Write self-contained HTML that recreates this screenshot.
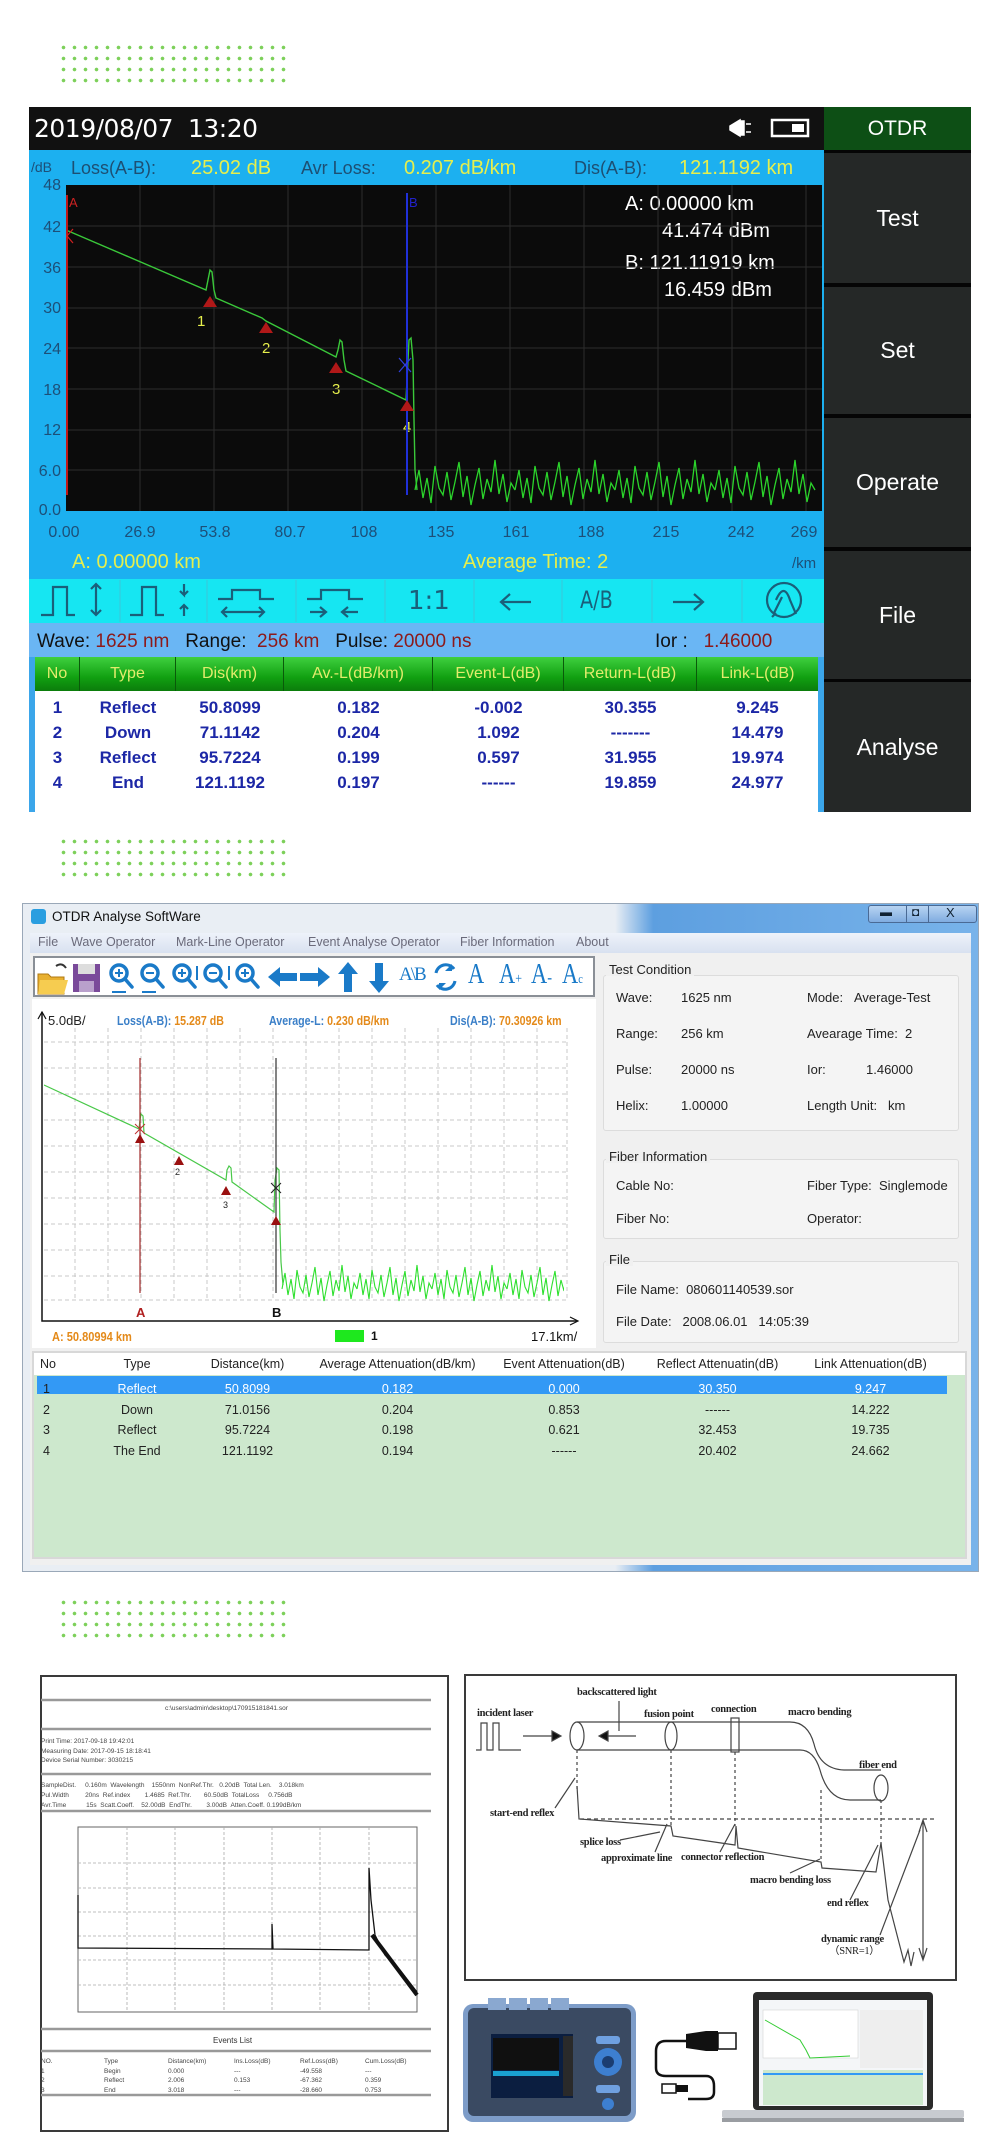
<!DOCTYPE html>
<html><head><meta charset="utf-8">
<style>
*{margin:0;padding:0;box-sizing:border-box}
body{width:1000px;height:2150px;background:#fff;position:relative;overflow:hidden;font-family:"Liberation Sans",sans-serif}
.a{position:absolute;white-space:nowrap;line-height:1}
.dots{position:absolute;left:58px;width:228px;height:44px;background-image:radial-gradient(circle,#7dd05a 1.6px,transparent 2px);background-size:11px 11px}
.y1{color:#1d4f78;font-size:16px;width:30px;text-align:right;left:31px}
.x1{color:#1d4f78;font-size:16px;top:525px;width:50px;text-align:center}
.lb{color:#1d4f73;font-size:18px;font-family:"Liberation Sans",sans-serif}
.yl{color:#e6ef4c;font-size:20px}
.btn{position:absolute;left:824px;width:147px;background:#252827;color:#fff;font-size:23px;display:flex;align-items:center;justify-content:center}
.th{position:absolute;top:657px;height:34px;color:#e3ec6c;font-size:16px;display:flex;align-items:center;justify-content:center;border-right:1px solid #0a5a0a}
.tr{position:absolute;color:#1c27a6;font-size:17px;font-weight:bold;text-align:center}
.g2{color:#222;font-size:13px}
.mn{color:#6a6a7a;font-size:12.5px;top:936px}
.sh{position:absolute;top:1352px;height:23px;font-size:12.5px;color:#222;display:flex;align-items:center;justify-content:center}
.sr{position:absolute;font-size:12.5px;color:#222;text-align:center}
.dg{font-family:"Liberation Serif",serif;font-weight:bold;font-size:10.5px;color:#222;letter-spacing:-0.3px}
.rp{font-size:6.5px;color:#444}
</style></head><body>

<div class="dots" style="top:42px"></div>
<div class="dots" style="top:836px"></div>
<div class="dots" style="top:1597px"></div>

<div class="a" style="left:29px;top:107px;width:795px;height:43px;background:#111"></div>
<div class="a" style="left:34px;top:116px;color:#fff;font-size:25px;font-family:'DejaVu Sans',sans-serif;letter-spacing:-0.5px">2019/08/07&nbsp;&nbsp;13:20</div>
<div class="a" style="left:29px;top:150px;width:795px;height:429px;background:#1cb0f0"></div>
<div class="a" style="left:29px;top:579px;width:795px;height:44px;background:#16e6f2"></div>
<div class="a" style="left:29px;top:623px;width:795px;height:34px;background:#6ab6f4"></div>
<div class="a" style="left:29px;top:657px;width:795px;height:155px;background:#3ba6ea"></div>
<div class="a" style="left:35px;top:657px;width:783px;height:155px;background:#fff"></div>
<div class="a" style="left:66px;top:185px;width:756px;height:326px;background:#0b0b0b"></div>

<div class="a" style="left:31px;top:160px;color:#1d4f78;font-size:14px">/dB</div>
<div class="a lb" style="left:71px;top:159px">Loss(A-B):</div>
<div class="a yl" style="left:191px;top:158px">25.02 dB</div>
<div class="a lb" style="left:301px;top:159px">Avr Loss:</div>
<div class="a yl" style="left:404px;top:158px">0.207 dB/km</div>
<div class="a lb" style="left:574px;top:159px">Dis(A-B):</div>
<div class="a yl" style="left:679px;top:158px">121.1192 km</div>

<div class="a y1" style="top:178px">48</div>
<div class="a y1" style="top:220px">42</div>
<div class="a y1" style="top:261px">36</div>
<div class="a y1" style="top:301px">30</div>
<div class="a y1" style="top:342px">24</div>
<div class="a y1" style="top:383px">18</div>
<div class="a y1" style="top:423px">12</div>
<div class="a y1" style="top:464px">6.0</div>
<div class="a y1" style="top:503px">0.0</div>

<div class="a x1" style="left:39px">0.00</div>
<div class="a x1" style="left:115px">26.9</div>
<div class="a x1" style="left:190px">53.8</div>
<div class="a x1" style="left:265px">80.7</div>
<div class="a x1" style="left:339px">108</div>
<div class="a x1" style="left:416px">135</div>
<div class="a x1" style="left:491px">161</div>
<div class="a x1" style="left:566px">188</div>
<div class="a x1" style="left:641px">215</div>
<div class="a x1" style="left:716px">242</div>
<div class="a x1" style="left:779px">269</div>
<div class="a" style="left:72px;top:552px;color:#e6ef4c;font-size:20px">A: 0.00000 km</div>
<div class="a" style="left:463px;top:552px;color:#e6ef4c;font-size:20px">Average Time: 2</div>
<div class="a" style="left:792px;top:556px;color:#1d4f78;font-size:15px">/km</div>

<div class="a" style="left:625px;top:194px;color:#fff;font-size:20px">A: 0.00000 km</div>
<div class="a" style="left:662px;top:221px;color:#fff;font-size:20px">41.474 dBm</div>
<div class="a" style="left:625px;top:253px;color:#fff;font-size:20px">B: 121.11919 km</div>
<div class="a" style="left:664px;top:280px;color:#fff;font-size:20px">16.459 dBm</div>

<div class="a" style="left:197px;top:314px;color:#e6ef4c;font-size:15px">1</div>
<div class="a" style="left:262px;top:341px;color:#e6ef4c;font-size:15px">2</div>
<div class="a" style="left:332px;top:382px;color:#e6ef4c;font-size:15px">3</div>
<div class="a" style="left:403px;top:420px;color:#e6ef4c;font-size:15px">4</div>
<div class="a" style="left:69px;top:196px;color:#c22;font-size:13px">A</div>
<div class="a" style="left:409px;top:196px;color:#22c;font-size:13px">B</div>

<div class="a" style="left:408px;top:588px;color:#1a5f7a;font-size:26px;font-family:'DejaVu Sans',sans-serif">1:1</div>
<div class="a" style="left:580px;top:588px;color:#1a5f7a;font-size:24px;font-family:'DejaVu Sans',sans-serif;transform:scaleX(.8);transform-origin:left">A/B</div>

<div class="a" style="left:37px;top:632px;font-size:19px;color:#111">Wave: <span style="color:#8c1a1a">1625 nm</span>&nbsp;&nbsp;&nbsp;Range:&nbsp;&nbsp;<span style="color:#8c1a1a">256 km</span>&nbsp;&nbsp;&nbsp;Pulse: <span style="color:#8c1a1a">20000 ns</span></div>
<div class="a" style="left:655px;top:632px;font-size:19px;color:#111">Ior :&nbsp;&nbsp;&nbsp;<span style="color:#8c1a1a">1.46000</span></div>

<div class="a" style="left:35px;top:657px;width:783px;height:34px;background:linear-gradient(#3fd03f,#11a011 60%,#0b7c0b)"></div>
<div class="th" style="left:35px;width:45px">No</div>
<div class="th" style="left:80px;width:96px">Type</div>
<div class="th" style="left:176px;width:108px">Dis(km)</div>
<div class="th" style="left:284px;width:149px">Av.-L(dB/km)</div>
<div class="th" style="left:433px;width:131px">Event-L(dB)</div>
<div class="th" style="left:564px;width:133px">Return-L(dB)</div>
<div class="th" style="left:697px;width:121px;border:none">Link-L(dB)</div>

<div class="tr" style="left:35px;top:695px;width:45px;line-height:25px">1<br>2<br>3<br>4</div>
<div class="tr" style="left:80px;top:695px;width:96px;line-height:25px">Reflect<br>Down<br>Reflect<br>End</div>
<div class="tr" style="left:176px;top:695px;width:108px;line-height:25px">50.8099<br>71.1142<br>95.7224<br>121.1192</div>
<div class="tr" style="left:284px;top:695px;width:149px;line-height:25px">0.182<br>0.204<br>0.199<br>0.197</div>
<div class="tr" style="left:433px;top:695px;width:131px;line-height:25px">-0.002<br>1.092<br>0.597<br>------</div>
<div class="tr" style="left:564px;top:695px;width:133px;line-height:25px">30.355<br>-------<br>31.955<br>19.859</div>
<div class="tr" style="left:697px;top:695px;width:121px;line-height:25px">9.245<br>14.479<br>19.974<br>24.977</div>

<div class="a" style="left:824px;top:107px;width:147px;height:705px;background:#050505"></div>
<div class="btn" style="top:107px;height:43px;background:#0d4f15;font-size:21px">OTDR</div>
<div class="btn" style="top:153px;height:130px">Test</div>
<div class="btn" style="top:287px;height:127px">Set</div>
<div class="btn" style="top:418px;height:129px">Operate</div>
<div class="btn" style="top:551px;height:128px">File</div>
<div class="btn" style="top:682px;height:130px">Analyse</div>

<div class="a" style="left:22px;top:903px;width:957px;height:669px;background:linear-gradient(90deg,#e9eef4 0,#e9eef4 62%,#5d9fe0 66%,#78b3ea 100%);border:1px solid #9aa8b8"></div>
<div class="a" style="left:30px;top:933px;width:941px;height:632px;background:#f0f0f0"></div>
<div class="a" style="left:30px;top:933px;width:941px;height:20px;background:linear-gradient(#eef2fa,#d8e1f0)"></div>
<div class="a" style="left:31px;top:909px;width:15px;height:15px;background:#2a9ee0;border-radius:3px"></div>
<div class="a" style="left:52px;top:910px;font-size:13.5px;color:#111">OTDR Analyse SoftWare</div>
<div class="a" style="left:868px;top:905px;width:109px;height:18px;border:1px solid #4a6a95;border-radius:3px;background:linear-gradient(#b8d4f2,#80ace0)"></div>
<div class="a" style="left:880px;top:906px;font-size:12px;color:#123">▬</div>
<div class="a" style="left:906px;top:906px;width:1px;height:16px;background:#4a6a95"></div>
<div class="a" style="left:912px;top:906px;font-size:12px;color:#123">◘</div>
<div class="a" style="left:928px;top:906px;width:1px;height:16px;background:#4a6a95"></div>
<div class="a" style="left:946px;top:906px;font-size:13px;color:#123">X</div>

<div class="a mn" style="left:38px">File</div>
<div class="a mn" style="left:71px">Wave Operator</div>
<div class="a mn" style="left:176px">Mark-Line Operator</div>
<div class="a mn" style="left:308px">Event Analyse Operator</div>
<div class="a mn" style="left:460px">Fiber Information</div>
<div class="a mn" style="left:576px">About</div>

<div class="a" style="left:33px;top:956px;width:562px;height:41px;background:#fff;border:2px solid #8a8f96"></div>
<div class="a" style="left:32px;top:999px;width:564px;height:349px;background:#fff"></div>

<div class="a" style="left:48px;top:1014px;font-size:13px;color:#222">5.0dB/</div>
<div class="a" style="left:117px;top:1015px;font-size:12.5px;color:#3a7fc8;font-weight:bold;transform:scaleX(.85);transform-origin:left">Loss(A-B): <span style="color:#e48a1a">15.287 dB</span></div>
<div class="a" style="left:269px;top:1015px;font-size:12.5px;color:#3a7fc8;font-weight:bold;transform:scaleX(.85);transform-origin:left">Average-L: <span style="color:#e48a1a">0.230 dB/km</span></div>
<div class="a" style="left:450px;top:1015px;font-size:12.5px;color:#3a7fc8;font-weight:bold;transform:scaleX(.85);transform-origin:left">Dis(A-B): <span style="color:#e48a1a">70.30926 km</span></div>
<div class="a" style="left:136px;top:1306px;font-size:13px;color:#b02020;font-weight:bold">A</div>
<div class="a" style="left:272px;top:1306px;font-size:13px;color:#111;font-weight:bold">B</div>
<div class="a" style="left:175px;top:1168px;font-size:9px;color:#222">2</div>
<div class="a" style="left:223px;top:1201px;font-size:9px;color:#222">3</div>
<div class="a" style="left:52px;top:1330px;font-size:13px;color:#e48a1a;font-weight:bold;transform:scaleX(.85);transform-origin:left">A: 50.80994 km</div>
<div class="a" style="left:335px;top:1330px;width:29px;height:12px;background:#1ee81e"></div>
<div class="a" style="left:371px;top:1330px;font-size:12px;color:#111;font-weight:bold">1</div>
<div class="a" style="left:531px;top:1330px;font-size:13px;color:#111">17.1km/</div>

<div class="a" style="left:603px;top:975px;width:356px;height:156px;border:1px solid #dcdcdc;border-radius:3px;background:#f4f4f4"></div>
<div class="a" style="left:606px;top:963px;font-size:13px;color:#222;background:#f0f0f0;padding:0 3px">Test Condition</div>
<div class="a g2" style="left:616px;top:991px">Wave:</div><div class="a g2" style="left:681px;top:991px">1625 nm</div>
<div class="a g2" style="left:807px;top:991px">Mode:&nbsp;&nbsp;&nbsp;Average-Test</div>
<div class="a g2" style="left:616px;top:1027px">Range:</div><div class="a g2" style="left:681px;top:1027px">256 km</div>
<div class="a g2" style="left:807px;top:1027px">Avearage Time:&nbsp;&nbsp;2</div>
<div class="a g2" style="left:616px;top:1063px">Pulse:</div><div class="a g2" style="left:681px;top:1063px">20000 ns</div>
<div class="a g2" style="left:807px;top:1063px">Ior:</div><div class="a g2" style="left:866px;top:1063px">1.46000</div>
<div class="a g2" style="left:616px;top:1099px">Helix:</div><div class="a g2" style="left:681px;top:1099px">1.00000</div>
<div class="a g2" style="left:807px;top:1099px">Length Unit:&nbsp;&nbsp;&nbsp;km</div>

<div class="a" style="left:603px;top:1159px;width:356px;height:80px;border:1px solid #dcdcdc;border-radius:3px;background:#f4f4f4"></div>
<div class="a" style="left:606px;top:1150px;font-size:13px;color:#222;background:#f0f0f0;padding:0 3px">Fiber Information</div>
<div class="a g2" style="left:616px;top:1179px">Cable No:</div>
<div class="a g2" style="left:807px;top:1179px">Fiber Type:&nbsp;&nbsp;Singlemode</div>
<div class="a g2" style="left:616px;top:1212px">Fiber No:</div>
<div class="a g2" style="left:807px;top:1212px">Operator:</div>

<div class="a" style="left:603px;top:1261px;width:356px;height:82px;border:1px solid #dcdcdc;border-radius:3px;background:#f4f4f4"></div>
<div class="a" style="left:606px;top:1253px;font-size:13px;color:#222;background:#f0f0f0;padding:0 3px">File</div>
<div class="a g2" style="left:616px;top:1283px">File Name:&nbsp;&nbsp;080601140539.sor</div>
<div class="a g2" style="left:616px;top:1315px">File Date:&nbsp;&nbsp;&nbsp;2008.06.01&nbsp;&nbsp;&nbsp;14:05:39</div>

<div class="a" style="left:32px;top:1351px;width:935px;height:208px;background:#cde8cd;border:2px solid #d8d8d8"></div>
<div class="a" style="left:34px;top:1353px;width:931px;height:22px;background:#fff"></div>
<div class="a" style="left:37px;top:1376px;width:910px;height:18px;background:#3399f5"></div>
<div class="sh" style="left:34px;width:53px;justify-content:flex-start;padding-left:6px">No</div>
<div class="sh" style="left:87px;width:100px">Type</div>
<div class="sh" style="left:187px;width:121px">Distance(km)</div>
<div class="sh" style="left:308px;width:179px">Average Attenuation(dB/km)</div>
<div class="sh" style="left:487px;width:154px">Event Attenuation(dB)</div>
<div class="sh" style="left:641px;width:153px">Reflect Attenuatin(dB)</div>
<div class="sh" style="left:794px;width:153px">Link Attenuation(dB)</div>
<div class="sr" style="left:34px;top:1379px;width:53px;text-align:left;padding-left:9px;line-height:20.5px">1<br>2<br>3<br>4</div>
<div class="sr" style="left:87px;top:1379px;width:100px;line-height:20.5px"><span style="color:#fff">Reflect</span><br>Down<br>Reflect<br>The End</div>
<div class="sr" style="left:187px;top:1379px;width:121px;line-height:20.5px"><span style="color:#fff">50.8099</span><br>71.0156<br>95.7224<br>121.1192</div>
<div class="sr" style="left:308px;top:1379px;width:179px;line-height:20.5px"><span style="color:#fff">0.182</span><br>0.204<br>0.198<br>0.194</div>
<div class="sr" style="left:487px;top:1379px;width:154px;line-height:20.5px"><span style="color:#fff">0.000</span><br>0.853<br>0.621<br>------</div>
<div class="sr" style="left:641px;top:1379px;width:153px;line-height:20.5px"><span style="color:#fff">30.350</span><br>------<br>32.453<br>20.402</div>
<div class="sr" style="left:794px;top:1379px;width:153px;line-height:20.5px"><span style="color:#fff">9.247</span><br>14.222<br>19.735<br>24.662</div>

<div class="a" style="left:399px;top:965px;font-family:'Liberation Serif',serif;font-size:19px;color:#1a7ac8;letter-spacing:-2px">A\B</div>
<div class="a" style="left:468px;top:961px;font-family:'Liberation Serif',serif;font-size:28px;color:#1a7ac8;transform:scaleX(.8);transform-origin:left">A</div>
<div class="a" style="left:499px;top:961px;font-family:'Liberation Serif',serif;font-size:28px;color:#1a7ac8;transform:scaleX(.8);transform-origin:left">A<span style="font-size:15px">+</span></div>
<div class="a" style="left:531px;top:961px;font-family:'Liberation Serif',serif;font-size:28px;color:#1a7ac8;transform:scaleX(.8);transform-origin:left">A<span style="font-size:18px">-</span></div>
<div class="a" style="left:562px;top:961px;font-family:'Liberation Serif',serif;font-size:28px;color:#1a7ac8;transform:scaleX(.8);transform-origin:left">A<span style="font-size:13px">c</span></div>

<div class="a" style="left:40px;top:1675px;width:409px;height:457px;border:2px solid #3a3a3a;background:#fff"></div>
<div class="a rp" style="left:165px;top:1706px">c:\users\admin\desktop\170915181841.sor</div>
<div class="a rp" style="left:41px;top:1737px;line-height:9.5px">Print Time: 2017-09-18 19:42:01<br>Measuring Date: 2017-09-15 18:18:41<br>Device Serial Number: 3030215</div>
<div class="a rp" style="left:41px;top:1781px;line-height:10px">SampleDist.&nbsp;&nbsp;&nbsp;&nbsp;&nbsp;0.160m&nbsp;&nbsp;Wavelength&nbsp;&nbsp;&nbsp;&nbsp;1550nm&nbsp;&nbsp;NonRef.Thr.&nbsp;&nbsp;&nbsp;0.20dB&nbsp;&nbsp;Total Len.&nbsp;&nbsp;&nbsp;&nbsp;3.018km<br>Pul.Width&nbsp;&nbsp;&nbsp;&nbsp;&nbsp;&nbsp;&nbsp;&nbsp;&nbsp;20ns&nbsp;&nbsp;Ref.index&nbsp;&nbsp;&nbsp;&nbsp;&nbsp;&nbsp;&nbsp;&nbsp;1.4685&nbsp;&nbsp;Ref.Thr.&nbsp;&nbsp;&nbsp;&nbsp;&nbsp;&nbsp;&nbsp;60.50dB&nbsp;&nbsp;TotalLoss&nbsp;&nbsp;&nbsp;&nbsp;&nbsp;0.756dB<br>Avr.Time&nbsp;&nbsp;&nbsp;&nbsp;&nbsp;&nbsp;&nbsp;&nbsp;&nbsp;&nbsp;&nbsp;15s&nbsp;&nbsp;Scatt.Coeff.&nbsp;&nbsp;&nbsp;&nbsp;52.00dB&nbsp;&nbsp;EndThr.&nbsp;&nbsp;&nbsp;&nbsp;&nbsp;&nbsp;&nbsp;&nbsp;3.00dB&nbsp;&nbsp;Atten.Coeff.&nbsp;0.199dB/km</div>
<div class="a" style="left:213px;top:2037px;font-size:8px;color:#333">Events List</div>
<div class="a rp" style="left:41px;top:2057px;line-height:9.6px">NO.<br>1<br>2<br>3</div>
<div class="a rp" style="left:104px;top:2057px;line-height:9.6px">Type<br>Begin<br>Reflect<br>End</div>
<div class="a rp" style="left:168px;top:2057px;line-height:9.6px">Distance(km)<br>0.000<br>2.006<br>3.018</div>
<div class="a rp" style="left:234px;top:2057px;line-height:9.6px">Ins.Loss(dB)<br>---<br>0.153<br>---</div>
<div class="a rp" style="left:300px;top:2057px;line-height:9.6px">Ref.Loss(dB)<br>-49.558<br>-67.362<br>-28.660</div>
<div class="a rp" style="left:365px;top:2057px;line-height:9.6px">Cum.Loss(dB)<br>---<br>0.359<br>0.753</div>

<div class="a" style="left:464px;top:1674px;width:493px;height:307px;border:2px solid #3a3a3a;background:#fff"></div>
<div class="a dg" style="left:577px;top:1688px">backscattered light</div>
<div class="a dg" style="left:477px;top:1709px">incident laser</div>
<div class="a dg" style="left:644px;top:1710px">fusion point</div>
<div class="a dg" style="left:711px;top:1705px">connection</div>
<div class="a dg" style="left:788px;top:1708px">macro bending</div>
<div class="a dg" style="left:859px;top:1761px">fiber end</div>
<div class="a dg" style="left:490px;top:1809px">start-end reflex</div>
<div class="a dg" style="left:580px;top:1838px">splice loss</div>
<div class="a dg" style="left:601px;top:1854px">approximate line</div>
<div class="a dg" style="left:681px;top:1853px">connector reflection</div>
<div class="a dg" style="left:750px;top:1876px">macro bending loss</div>
<div class="a dg" style="left:827px;top:1899px">end reflex</div>
<div class="a dg" style="left:821px;top:1935px">dynamic range</div>
<div class="a dg" style="left:829px;top:1947px;font-weight:normal">（SNR=1）</div>

<svg class="a" style="left:0;top:0" width="1000" height="2150" viewBox="0 0 1000 2150">
 <defs>
  <clipPath id="c1"><rect x="66" y="185" width="756" height="326"/></clipPath>
  <clipPath id="c2"><rect x="44" y="1010" width="520" height="310"/></clipPath>
  <polyline id="n1" fill="none" stroke="#2bd42b" stroke-width="1.3" points="0,490 4,470 8,498 12,478 16,503 20,466 24,488 28,495 32,472 36,500 40,482 44,462 48,497 52,476 56,505 60,485 64,468 68,499 72,479 76,492 80,460 84,494 88,474 92,502 96,483 100,490"/>
  <polyline id="n2" fill="none" stroke="#2ee02e" stroke-width="1.1" points="0,1289 3,1273 6,1295 9,1279 12,1299 15,1270 18,1287 21,1293 24,1275 27,1297 30,1283 33,1267 36,1295 39,1278 42,1301 45,1285 48,1271 51,1296 54,1280 57,1291 60,1265 63,1292 66,1276 69,1299 72,1283 75,1289"/>
 </defs>
 <g stroke="#2c2c2c" stroke-width="1">
  <path d="M140 185V511M214 185V511M288 185V511M362 185V511M436 185V511M510 185V511M584 185V511M658 185V511M732 185V511M806 185V511"/>
  <path d="M66 226H822M66 267H822M66 308H822M66 348H822M66 389H822M66 430H822M66 470H822"/>
 </g>
 <g clip-path="url(#c1)">
  <polyline fill="none" stroke="#3ac83a" stroke-width="1.4" points="66,230 206,290 208,280 210,270 212,272 214,290 216,298 262,318 266,321 336,357 338,350 340,340 342,342 344,360 346,371 406,400 407,380 409,340 411,338 413,360 414,420 415,470 417,490"/>
  <use href="#n1" x="415"/><use href="#n1" x="515"/><use href="#n1" x="615"/><use href="#n1" x="715"/>
  <path d="M67 195V495" stroke="#c01818" stroke-width="2"/>
  <path d="M407 193V495" stroke="#2030d8" stroke-width="2"/>
  <path d="M61 229l12 14M61 243l12-14" stroke="#d02020" stroke-width="1.2"/>
  <path d="M399 358l12 14M399 372l12-14" stroke="#3040e0" stroke-width="1.2"/>
  <path d="M210 296l-7 11h14z M266 322l-7 11h14z M336 362l-7 11h14z M407 400l-7 11h14z" fill="#b01818"/>
 </g>
 <path d="M730 126l10-6v16l-10-6z M741 121h3v14h-3z M746 124h5M746 132h5" fill="#fff" stroke="#fff" stroke-width="1.5"/>
 <rect x="772" y="120" width="36" height="16" fill="none" stroke="#fff" stroke-width="2.5"/>
 <rect x="792" y="124" width="12" height="8" fill="#fff"/>
 <g stroke="#1a5f7a" stroke-width="2.2" fill="none">
  <path d="M120 580V622M207 580V622M296 580V622M385 580V622M474 580V622M562 580V622M652 580V622M742 580V622" stroke="#3cc6d8" stroke-width="1"/>
  <path d="M41 615h12v-28h14v28h8"/>
  <path d="M96 584v31M91 589l5-5 5 5M91 610l5 5 5-5"/>
  <path d="M130 615h12v-28h14v28h8"/>
  <path d="M184 584v11l-4-4M184 595l4-4M184 605v11M180 609l4-4 4 4"/>
  <path d="M218 599h14v-9h28v9h14"/>
  <path d="M222 612h42M227 607l-5 5 5 5M259 607l5 5-5 5"/>
  <path d="M307 599h14v-9h28v9h14"/>
  <path d="M310 612h16M320 607l6 5-6 5M342 612h16M348 607l-6 5 6 5"/>
  <path d="M501 602h30M510 594l-9 8 9 8"/>
  <path d="M673 602h30M694 594l9 8-9 8"/>
  <circle cx="784" cy="600" r="17"/>
  <path d="M772 617l4-4M776 600q8-18 14-0l6 14M782 597l-8 16"/>
 </g>
 <g stroke="#c8c8c8" stroke-width="1" stroke-dasharray="4,3">
  <path d="M75 1028V1300M108 1028V1300M141 1028V1300M174 1028V1300M207 1028V1300M240 1028V1300M273 1028V1300M306 1028V1300M339 1028V1300M372 1028V1300M405 1028V1300M438 1028V1300M471 1028V1300M504 1028V1300M537 1028V1300M567 1028V1300"/>
  <path d="M44 1042H567M44 1068H567M44 1094H567M44 1120H567M44 1146H567M44 1172H567M44 1198H567M44 1224H567M44 1250H567M44 1276H567M44 1300H567"/>
 </g>
 <path d="M42 1012V1321H577" stroke="#111" stroke-width="1.5" fill="none"/>
 <path d="M38 1019l4-7 4 7M570 1317l8 4-8 4" stroke="#111" stroke-width="1.2" fill="none"/>
 <g clip-path="url(#c2)">
  <polyline fill="none" stroke="#48c848" stroke-width="1.2" points="44,1085 139,1129 140,1120 141,1114 143,1116 144,1133 226,1180 227,1170 229,1166 231,1168 232,1182 274,1212 275,1180 277,1168 279,1170 280,1230 281,1262 283,1285"/>
  <use href="#n2" x="282"/><use href="#n2" x="357"/><use href="#n2" x="432"/><use href="#n2" x="507"/>
 </g>
 <path d="M140 1058V1293" stroke="#a02828" stroke-width="1.2"/>
 <path d="M276 1058V1293" stroke="#333" stroke-width="1.2"/>
 <path d="M135 1124l10 10M135 1134l10-10" stroke="#c03030"/>
 <path d="M271 1183l10 10M271 1193l10-10" stroke="#222"/>
 <path d="M140 1134l-5 9h10z M179 1156l-5 9h10z M226 1186l-5 9h10z M276 1216l-5 9h10z" fill="#9a1010"/>
 <path d="M38 974h10l3 3h13v17H38z" fill="#e8b030" stroke="#b07810"/>
 <path d="M40 980h28l-4 14H38z" fill="#f6cc50"/>
 <path d="M56 966q6-4 10 2" stroke="#333" stroke-width="2" fill="none"/>
 <rect x="73" y="964" width="27" height="28" fill="#7a4a9a"/>
 <rect x="78" y="964" width="17" height="10" fill="#ddd"/>
 <rect x="79" y="981" width="15" height="11" fill="#b9a0cc"/>
 <g stroke="#1a7ac8" stroke-width="3.5" fill="none" stroke-linecap="round">
  <circle cx="119" cy="973" r="8"/><path d="M125 979l7 8"/>
  <circle cx="150" cy="973" r="8"/><path d="M156 979l7 8"/>
  <circle cx="182" cy="973" r="8"/><path d="M188 979l7 8"/>
  <circle cx="213" cy="973" r="8"/><path d="M219 979l7 8"/>
  <circle cx="245" cy="973" r="8"/><path d="M251 979l7 8"/>
 </g>
 <g stroke="#1a7ac8" stroke-width="2" fill="none">
  <path d="M115 973h8M119 969v8M146 973h8M178 973h8M182 969v8M209 973h8M241 973h8M245 969v8"/>
  <path d="M112 992h14M142 992h14M197 966v14M229 966v14"/>
 </g>
 <g fill="#1a7ac8">
  <path d="M268 977l12-10v6h17v8h-17v6z"/>
  <path d="M330 977l-12-10v6h-18v8h18v6z"/>
  <path d="M348 962l10 12h-6v18h-8v-18h-6z"/>
  <path d="M379 993l10-12h-6v-18h-8v18h-6z"/>
 </g>
 <path d="M436 973a10 10 0 0 1 18-4M455 981a10 10 0 0 1-18 4" stroke="#1a7ac8" stroke-width="3" fill="none"/>
 <path d="M452 964v7h-7z M439 990v-7h7z" fill="#1a7ac8"/>
 <g stroke="#999" stroke-width="2.5">
  <path d="M41 1700H431M41 1729H431M41 1774H431M41 1811H431M41 2029H431M41 2051H431M41 2095H431"/>
 </g>
 <rect x="78" y="1827" width="339" height="185" fill="none" stroke="#666"/>
 <g stroke="#aaa" stroke-dasharray="3,2" stroke-width="0.8">
  <path d="M127 1827V2012M175 1827V2012M224 1827V2012M272 1827V2012M320 1827V2012M369 1827V2012"/>
  <path d="M78 1863H417M78 1888H417M78 1912H417M78 1936H417M78 1960H417M78 1985H417"/>
 </g>
 <polyline fill="none" stroke="#111" stroke-width="1.3" points="78,1895 78,1948 272,1949 272,1924 273,1949 369,1950 369,1868 371,1900 375,1935 385,1955 400,1970 417,1992"/>
 <path d="M372 1935l45 60" stroke="#111" stroke-width="4"/>
 <g stroke="#444" stroke-width="1.2" fill="none">
  <path d="M476 1750h5v-27h6v27h6v-27h6v27h22"/>
  <path d="M523 1736h30"/><path d="M561 1736l-9-5v10z" fill="#111"/>
  <ellipse cx="577" cy="1736" rx="7" ry="14"/>
  <path d="M577 1722H790q18 0 24 22q6 25 30 26h37"/>
  <path d="M577 1750H800q14 0 20 20q8 30 30 30h31"/>
  <ellipse cx="881" cy="1788" rx="7" ry="13"/>
  <ellipse cx="671" cy="1736" rx="6" ry="14"/>
  <rect x="731" y="1718" width="8" height="34"/>
  <path d="M636 1736h-30"/><path d="M599 1736l9-5v10z" fill="#111"/>
  <path d="M619 1701v30"/>
  <path d="M577 1750V1790M671 1750V1826M735 1752V1826M821 1790V1861M881 1800V1845" stroke-dasharray="3,3"/>
  <path d="M580 1819H936" stroke-dasharray="4,3"/>
  <polyline points="577,1786 579,1819 671,1826 673,1836 735,1845 736,1826 738,1848 821,1862 822,1868 876,1872 881,1843 888,1900 904,1962 908,1950 911,1966 914,1952"/>
  <path d="M923 1822V1958M919 1832l4-12 4 12M919 1948l4 12 4-12"/>
  <path d="M555 1808l20-30M620 1840l40-8M655 1852l12-28M720 1852l15-28M790 1873l30-14M850 1900l28-55M880 1935l40-105"/>
 </g>
 <rect x="463" y="2004" width="173" height="118" rx="10" fill="#7d9cc8"/>
 <rect x="468" y="2008" width="163" height="108" rx="6" fill="#3a4a62"/>
 <rect x="488" y="1998" width="18" height="12" fill="#8aa8d0"/><rect x="509" y="1998" width="18" height="12" fill="#8aa8d0"/><rect x="530" y="1998" width="18" height="12" fill="#8aa8d0"/><rect x="551" y="1998" width="18" height="12" fill="#8aa8d0"/>
 <rect x="491" y="2034" width="82" height="64" fill="#0b1e40"/>
 <rect x="493" y="2038" width="66" height="32" fill="#101010"/>
 <rect x="493" y="2071" width="66" height="5" fill="#1aa0d0"/>
 <rect x="563" y="2036" width="10" height="60" fill="#2a2a2a"/>
 <circle cx="608" cy="2062" r="14" fill="#3d7fd0"/><circle cx="608" cy="2062" r="6" fill="#1b3d70"/>
 <rect x="596" y="2036" width="24" height="8" rx="3" fill="#6fa0e0"/>
 <rect x="596" y="2085" width="24" height="8" rx="3" fill="#6fa0e0"/>
 <circle cx="608" cy="2104" r="6" fill="#3d7fd0"/>
 <path d="M686 2041h-20q-10 0-10 10v17q0 8 10 8h40q8 0 8 10v6q0 7-8 7h-18" stroke="#111" stroke-width="2.5" fill="none"/>
 <path d="M686 2034l20-3v20l-20-3z" fill="#111"/><rect x="706" y="2031" width="12" height="20" fill="#111"/>
 <rect x="718" y="2033" width="18" height="16" fill="#fff" stroke="#111" stroke-width="1.5"/>
 <rect x="662" y="2084" width="14" height="9" fill="#fff" stroke="#111" stroke-width="1.5"/><rect x="676" y="2085" width="12" height="7" fill="#111"/>
 <rect x="753" y="1992" width="180" height="118" rx="4" fill="#2a2a2a"/>
 <rect x="759" y="2000" width="168" height="106" fill="#f4f6f8"/>
 <rect x="763" y="2010" width="95" height="48" fill="#fff" stroke="#ccc" stroke-width="0.5"/>
 <polyline points="765,2020 800,2040 806,2050 810,2058 850,2056" fill="none" stroke="#3c3" stroke-width="1"/>
 <rect x="763" y="2070" width="160" height="35" fill="#cde8cd"/>
 <rect x="763" y="2073" width="160" height="2" fill="#3399f5"/>
 <rect x="860" y="2010" width="63" height="58" fill="#eee"/>
 <rect x="722" y="2110" width="242" height="8" rx="2" fill="#c8cbd0"/>
 <rect x="722" y="2118" width="242" height="4" fill="#9a9da2"/>
</svg>
</body></html>
